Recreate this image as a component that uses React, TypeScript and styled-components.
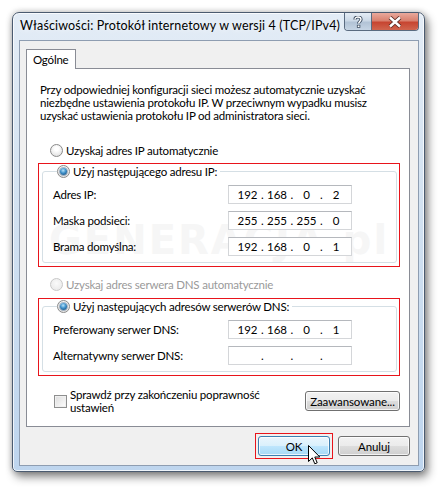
import React from 'react';
import styled, { createGlobalStyle } from 'styled-components';

const GlobalStyle = createGlobalStyle`
  html, body {
    margin: 0;
    padding: 0;
    background: #ffffff;
  }
  body {
    font-family: Lato, 'Noto Sans', sans-serif;
    font-size: 11.5px;
    letter-spacing: -0.2px;
    color: #000;
  }
`;

const Stage = styled.div`
  width: 441px;
  height: 488px;
  padding: 12px 0 0 12px;
  box-sizing: border-box;
`;

const Window = styled.div`
  position: relative;
  width: 413px;
  height: 460px;
  box-sizing: border-box;
  border: 1px solid #4b5b70;
  border-radius: 7px 7px 5px 5px;
  background: linear-gradient(180deg, #e3ecf6 0%, #d3e2f1 40%, #bed5ee 100%);
  box-shadow: 3px 5px 10px rgba(0, 0, 0, 0.45), 0 0 6px rgba(0, 0, 0, 0.25),
    inset 0 0 0 1px rgba(255, 255, 255, 0.75);
  display: flex;
  flex-direction: column;
`;

const TitleBar = styled.div`
  height: 27px;
  display: flex;
  align-items: flex-start;
  padding-left: 7px;
`;

const Title = styled.div`
  font-size: 12.5px;
  letter-spacing: 0.15px;
  line-height: 26px;
  color: #000;
  text-shadow: 0 0 6px rgba(255, 255, 255, 0.9);
  flex: 1;
  min-width: 0;
  white-space: nowrap;
`;

const CaptionButtons = styled.div`
  display: flex;
  flex: none;
  margin-right: 5px;
  border: 1px solid #5a6b80;
  border-top: none;
  border-radius: 0 0 4px 4px;
  overflow: hidden;
  height: 17px;
`;

const CaptionButton = styled.div<{ $close?: boolean }>`
  width: ${(p) => (p.$close ? '46px' : '26px')};
  height: 17px;
  display: flex;
  align-items: center;
  justify-content: center;
  border-left: ${(p) => (p.$close ? '1px solid #5a6b80' : 'none')};
  background: ${(p) =>
    p.$close
      ? 'linear-gradient(180deg, #e9a99c 0%, #d9816f 45%, #c74531 55%, #d0654e 100%)'
      : 'linear-gradient(180deg, #e4ecf5 0%, #cbd8e6 45%, #b2c3d6 55%, #c5d4e4 100%)'};
`;

const Client = styled.div`
  flex: 1;
  margin: 0 5px 5px 6px;
  border: 1px solid #8e9db1;
  background: #f0f0f0;
  display: flex;
  flex-direction: column;
  padding: 8px 8px 0 6px;
`;

const TabStrip = styled.div`
  display: flex;
  height: 19px;
`;

const Tab = styled.div`
  width: 50px;
  height: 20px;
  box-sizing: border-box;
  border: 1px solid #898c95;
  border-bottom: none;
  background: #fff;
  padding-left: 6px;
  line-height: 19px;
  position: relative;
  z-index: 1;
`;

const Panel = styled.div`
  position: relative;
  border: 1px solid #898c95;
  background: #fff;
  height: 359px;
  box-sizing: border-box;
  display: flex;
  flex-direction: column;
  padding: 14px 9px 0 11px;
  overflow: hidden;
`;

const Watermark = styled.div`
  position: absolute;
  left: 22px;
  top: 152px;
  width: 336px;
  font-family: 'DejaVu Sans', sans-serif;
  font-weight: bold;
  font-size: 40px;
  letter-spacing: 2px;
  line-height: 38px;
  color: #f6f6f6;
  text-align: center;
  pointer-events: none;
`;

const Content = styled.div`
  position: relative;
  display: flex;
  flex-direction: column;
`;

const Paragraph = styled.p`
  margin: 0 0 0 2px;
  line-height: 13px;
  white-space: nowrap;
`;

const RadioRow = styled.label<{ $disabled?: boolean }>`
  display: flex;
  align-items: center;
  gap: 3px;
  height: 15px;
  margin-left: 12px;
  color: ${(p) => (p.$disabled ? '#9a9a9a' : '#000')};
`;

const Radio = styled.span<{ $checked?: boolean; $disabled?: boolean }>`
  width: 13px;
  height: 13px;
  flex: none;
  box-sizing: border-box;
  border-radius: 50%;
  border: 1px solid ${(p) => (p.$disabled ? '#c8c8c8' : '#8a8a8a')};
  background: ${(p) =>
    p.$disabled
      ? 'radial-gradient(circle at 50% 40%, #fafafa, #e6e6e6)'
      : 'radial-gradient(circle at 50% 35%, #ffffff 20%, #d8d8d8 100%)'};
  display: flex;
  align-items: center;
  justify-content: center;
  &::after {
    content: '';
    display: ${(p) => (p.$checked ? 'block' : 'none')};
    width: 7px;
    height: 7px;
    border-radius: 50%;
    background: radial-gradient(circle at 45% 35%, #b5e3fb 0%, #3f90c9 45%, #0d3d6b 100%);
    box-shadow: 0 0 0 1px rgba(40, 80, 120, 0.4);
  }
`;

const Highlight = styled.div`
  border: 1px solid #e8141b;
  width: 362px;
  box-sizing: border-box;
  padding: 0 2px 3px 3px;
`;

const Group = styled.fieldset`
  margin: 0;
  border: 1px solid #d5dfe5;
  border-radius: 3px;
  padding: 6px 0 6px 10px;
  min-width: 0;
`;

const Legend = styled.legend`
  padding: 0 3px 0 0;
  margin-left: 4px;
  display: flex;
  align-items: center;
  gap: 3px;
  height: 15px;
`;

const FieldGrid = styled.div`
  display: grid;
  grid-template-columns: 175px 124px;
  row-gap: 7px;
  align-items: center;
`;

const FieldLabel = styled.span`
  line-height: 19px;
`;

const IpBox = styled.div`
  height: 19px;
  box-sizing: border-box;
  border: 1px solid #d4d6d9;
  border-top-color: #b5b8bd;
  background: #fff;
  display: flex;
  align-items: center;
  padding-left: 7px;
`;

const Octet = styled.span`
  width: 23px;
  text-align: center;
  line-height: 17px;
  letter-spacing: 0;
`;

const Dot = styled.span`
  width: 6.5px;
  text-align: center;
  line-height: 17px;
`;

const BottomRow = styled.div`
  display: flex;
  align-items: center;
  margin-top: 12px;
`;

const CheckRow = styled.label`
  display: flex;
  align-items: center;
  gap: 3px;
  margin-left: 16px;
  flex: 1;
`;

const Checkbox = styled.span`
  width: 13px;
  height: 13px;
  flex: none;
  box-sizing: border-box;
  border: 1px solid #8e8f8f;
  background: linear-gradient(135deg, #dcdcdc 0%, #f4f4f4 70%, #ffffff 100%);
  box-shadow: inset 0 0 0 1px #f0f0f0;
`;

const CheckText = styled.span`
  line-height: 13px;
`;

const Button = styled.button<{ $hot?: boolean; $w?: number }>`
  width: ${(p) => p.$w ?? 72}px;
  height: 20px;
  flex: none;
  box-sizing: border-box;
  font-family: Lato, 'Noto Sans', sans-serif;
  font-size: 11.5px;
  letter-spacing: -0.1px;
  color: #000;
  border-radius: 3px;
  padding: 0;
  border: 1px solid ${(p) => (p.$hot ? '#3c7fb1' : '#707070')};
  box-shadow: inset 0 0 0 1px rgba(255, 255, 255, 0.75);
  background: ${(p) =>
    p.$hot
      ? 'linear-gradient(180deg, #eaf6fd 0%, #d9f0fc 50%, #bee6fd 51%, #a7d9f5 100%)'
      : 'linear-gradient(180deg, #f2f2f2 0%, #ebebeb 50%, #dddddd 51%, #cfcfcf 100%)'};
`;

const Footer = styled.div`
  display: flex;
  justify-content: flex-end;
  align-items: center;
  gap: 5px;
  margin-top: 6px;
`;

const OkMark = styled.div`
  position: relative;
  border: 1px solid #e8141b;
  padding: 2px;
  display: flex;
`;

const Cursor = styled.svg`
  position: absolute;
  left: 52px;
  top: 11px;
`;

const Spacer = styled.div<{ $h: number }>`
  height: ${(p) => p.$h}px;
  flex: none;
`;

const ip = (parts: string[]) => (
  <IpBox>
    {parts.map((o, i) => (
      <React.Fragment key={i}>
        <Octet>{o}</Octet>
        {i < 3 && <Dot>.</Dot>}
      </React.Fragment>
    ))}
  </IpBox>
);

const App = () => {
  return (
    <Stage>
      <GlobalStyle />
      <Window>
        <TitleBar>
          <Title>Właściwości: Protokół internetowy w wersji 4 (TCP/IPv4)</Title>
          <CaptionButtons>
            <CaptionButton>
              <svg width="10" height="12" viewBox="0 0 10 12">
                <path
                  d="M2 3.5 C2 1.5 3.5 1 5 1 C6.8 1 8 2 8 3.6 C8 5.2 5.6 5.6 5.6 7.6"
                  fill="none"
                  stroke="#3a4a5e"
                  strokeWidth="3.2"
                />
                <path
                  d="M2 3.5 C2 1.5 3.5 1 5 1 C6.8 1 8 2 8 3.6 C8 5.2 5.6 5.6 5.6 7.6"
                  fill="none"
                  stroke="#fff"
                  strokeWidth="1.4"
                />
                <rect x="3.9" y="8.8" width="3.4" height="3" fill="#3a4a5e" />
                <rect x="4.7" y="9.5" width="1.8" height="1.6" fill="#fff" />
              </svg>
            </CaptionButton>
            <CaptionButton $close>
              <svg width="14" height="12" viewBox="0 0 14 12">
                <path d="M2 1.5 L12 10.5 M12 1.5 L2 10.5" stroke="#5a2a22" strokeWidth="4.2" />
                <path d="M2 1.5 L12 10.5 M12 1.5 L2 10.5" stroke="#fff" strokeWidth="2.4" />
              </svg>
            </CaptionButton>
          </CaptionButtons>
        </TitleBar>
        <Client>
          <TabStrip>
            <Tab>Ogólne</Tab>
          </TabStrip>
          <Panel>
            <Watermark>GENERACJA.pl</Watermark>
            <Content>
              <Paragraph>
                Przy odpowiedniej konfiguracji sieci możesz automatycznie uzyskać
                <br />
                niezbędne ustawienia protokołu IP. W przeciwnym wypadku musisz
                <br />
                uzyskać ustawienia protokołu IP od administratora sieci.
              </Paragraph>
              <Spacer $h={21} />
              <RadioRow>
                <Radio />
                Uzyskaj adres IP automatycznie
              </RadioRow>
              <Spacer $h={5} />
              <Highlight>
                <Group>
                  <Legend>
                    <Radio $checked />
                    Użyj następującego adresu IP:
                  </Legend>
                  <FieldGrid>
                    <FieldLabel>Adres IP:</FieldLabel>
                    {ip(['192', '168', '0', '2'])}
                    <FieldLabel>Maska podsieci:</FieldLabel>
                    {ip(['255', '255', '255', '0'])}
                    <FieldLabel>Brama domyślna:</FieldLabel>
                    {ip(['192', '168', '0', '1'])}
                  </FieldGrid>
                </Group>
              </Highlight>
              <Spacer $h={10} />
              <RadioRow $disabled>
                <Radio $disabled />
                Uzyskaj adres serwera DNS automatycznie
              </RadioRow>
              <Spacer $h={6} />
              <Highlight>
                <Group>
                  <Legend>
                    <Radio $checked />
                    Użyj następujących adresów serwerów DNS:
                  </Legend>
                  <FieldGrid>
                    <FieldLabel>Preferowany serwer DNS:</FieldLabel>
                    {ip(['192', '168', '0', '1'])}
                    <FieldLabel>Alternatywny serwer DNS:</FieldLabel>
                    {ip(['', '', '', ''])}
                  </FieldGrid>
                </Group>
              </Highlight>
              <BottomRow>
                <CheckRow>
                  <Checkbox />
                  <CheckText>
                    Sprawdź przy zakończeniu poprawność
                    <br />
                    ustawień
                  </CheckText>
                </CheckRow>
                <Button $w={95}>Zaawansowane...</Button>
              </BottomRow>
            </Content>
          </Panel>
          <Footer>
            <OkMark>
              <Button $hot>OK</Button>
              <Cursor width="13" height="21" viewBox="0 0 13 21">
                <path
                  d="M0.5 0.5 L0.5 16.5 L4.3 12.9 L6.8 18.8 L9.2 17.8 L6.8 12 L11.8 12 Z"
                  fill="#fff"
                  stroke="#000"
                  strokeWidth="1"
                  strokeLinejoin="round"
                />
              </Cursor>
            </OkMark>
            <Button>Anuluj</Button>
          </Footer>
        </Client>
      </Window>
    </Stage>
  );
};

export default App;
